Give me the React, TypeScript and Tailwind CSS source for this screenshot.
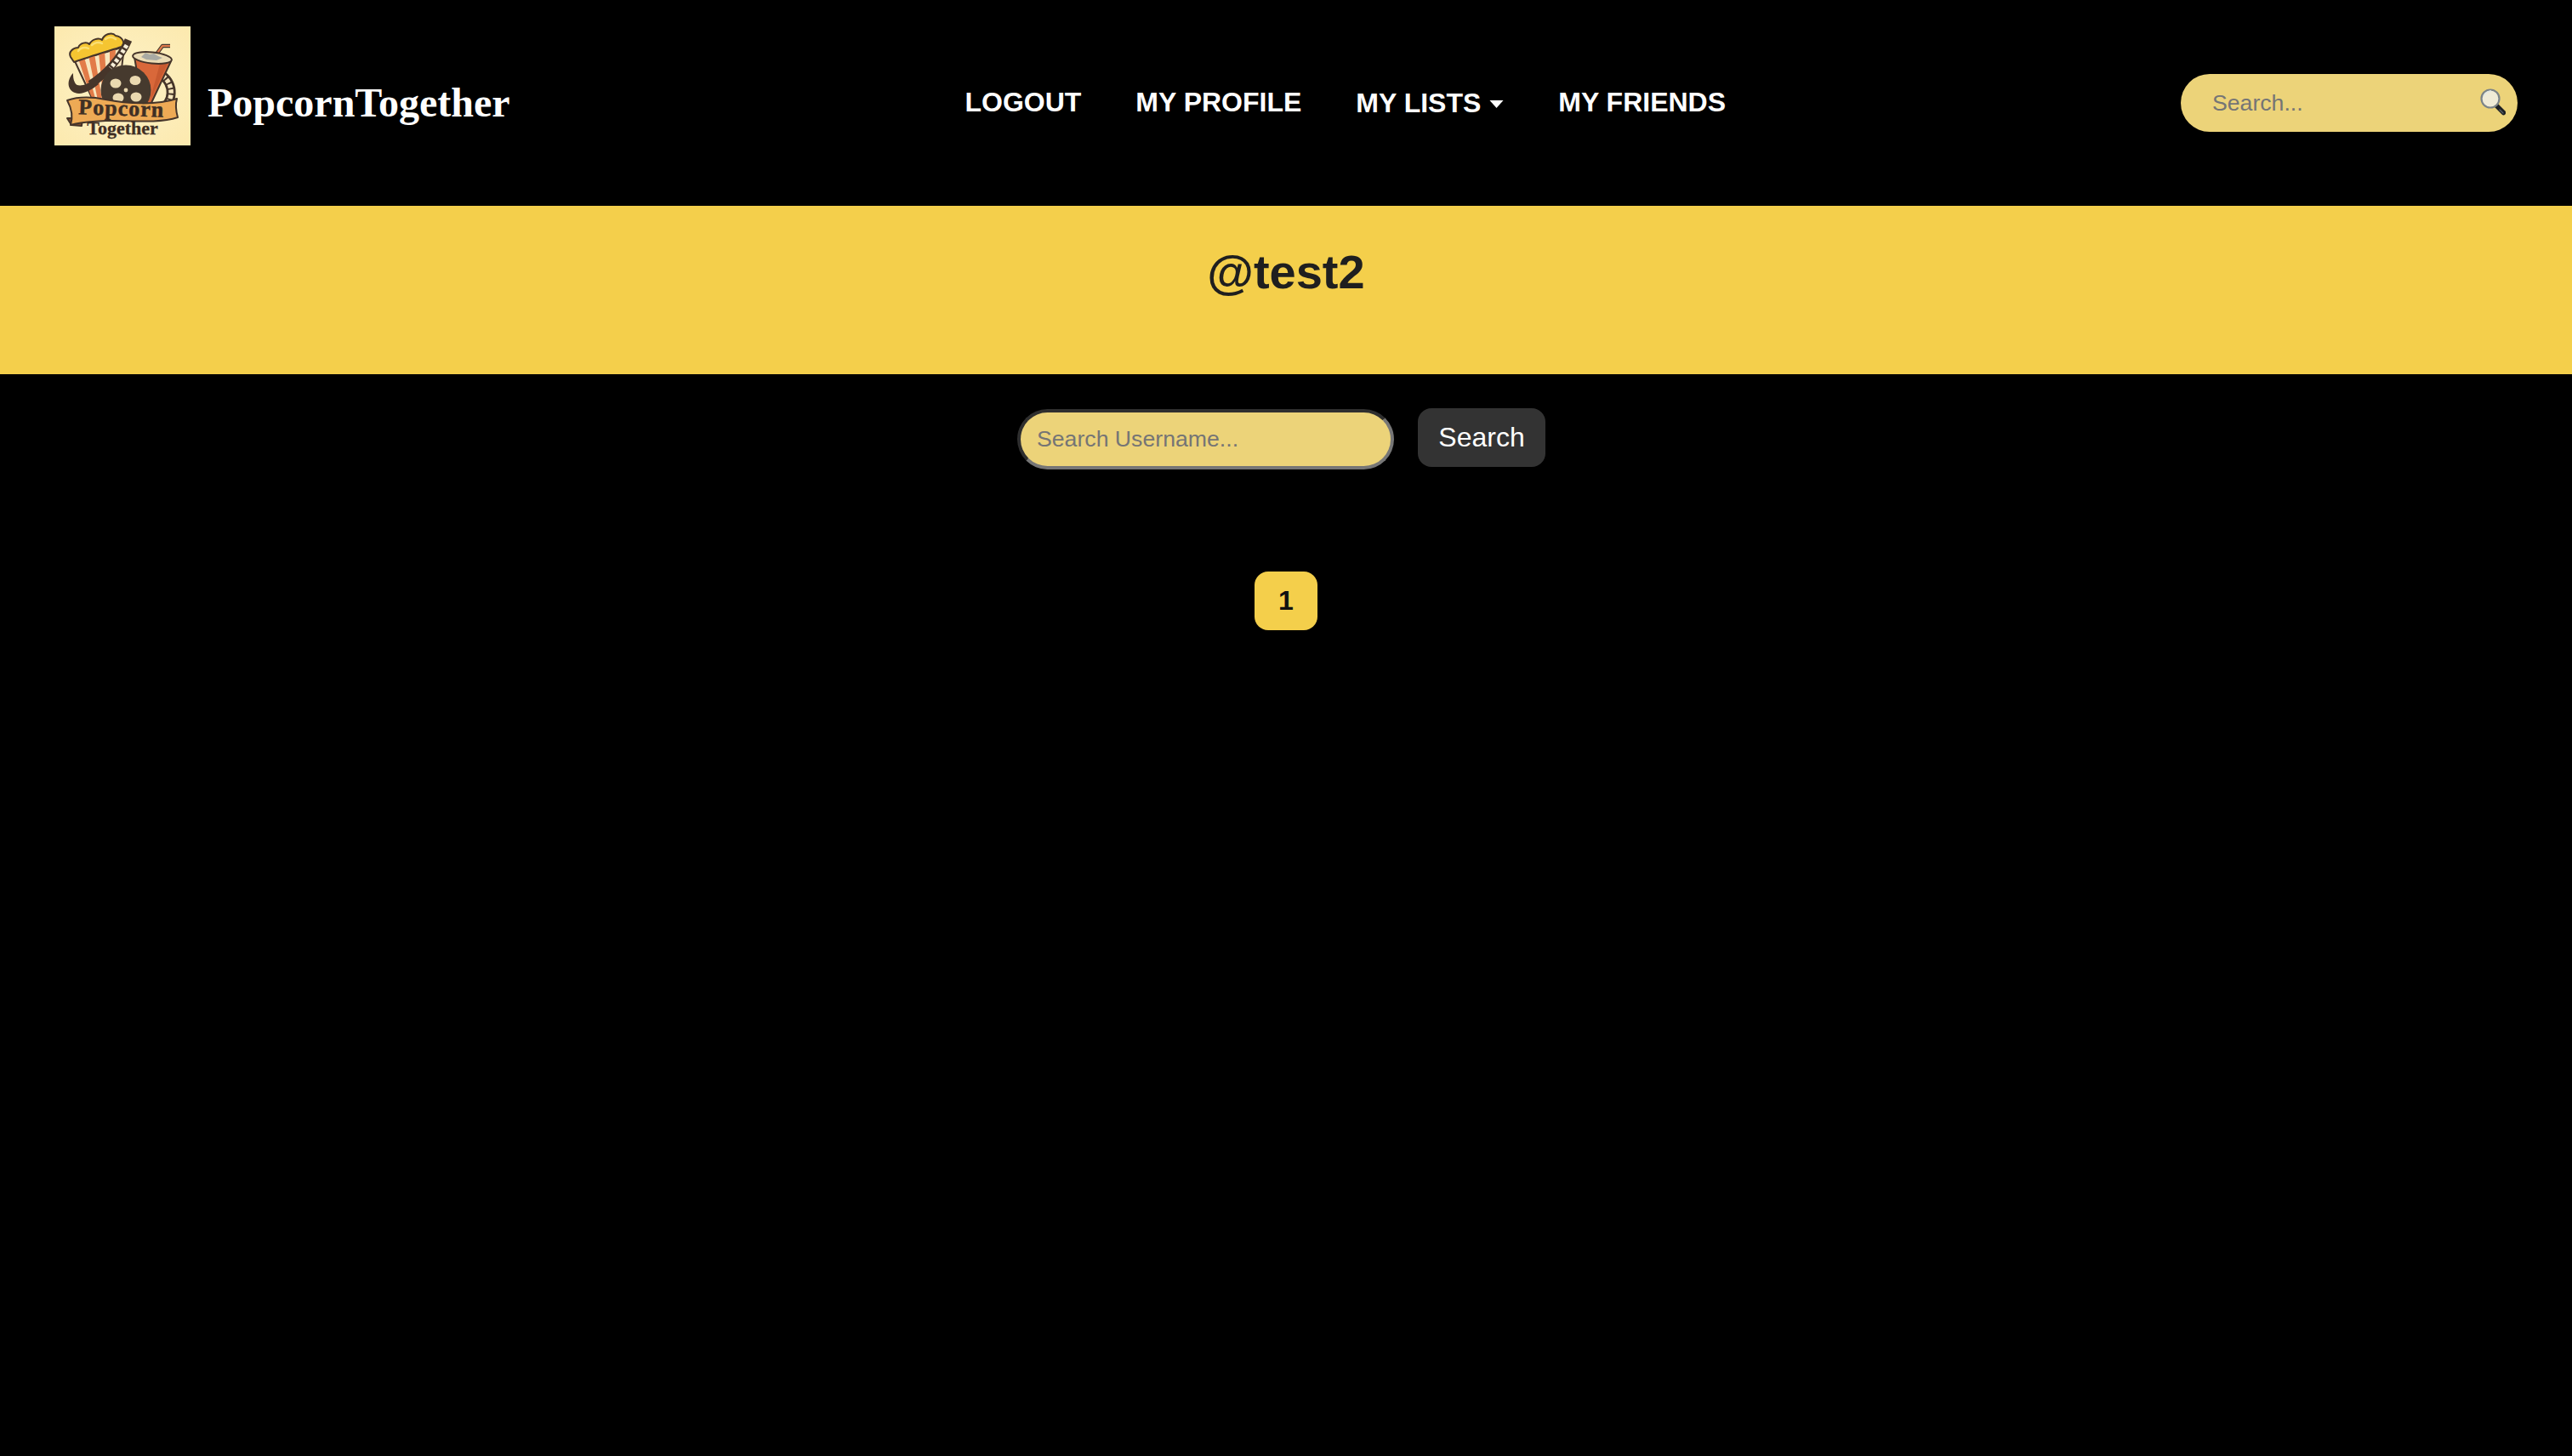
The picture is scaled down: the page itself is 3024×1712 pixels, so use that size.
import React from 'react';

const PopcornLogo: React.FC = () => {
  const outline = '#46352a';
  return (
    <svg viewBox="0 0 160 140" className="w-[160px] h-[140px] block">
      <defs>
        <radialGradient id="logoBg" cx="50%" cy="50%" r="70%">
          <stop offset="0%" stopColor="#fdf2c8" />
          <stop offset="100%" stopColor="#fce9ae" />
        </radialGradient>
        <clipPath id="bucketClip">
          <path d="M24 41 L82 24 L74 92 L45 86 Z" />
        </clipPath>
      </defs>
      <rect width="160" height="140" fill="url(#logoBg)" />

      {/* film ring behind the cup */}
      <path d="M127 58 C141 68 141 90 124 98" fill="none" stroke={outline} strokeWidth="11" />
      <path d="M127 58 C141 68 141 90 124 98" fill="none" stroke="#f6e6bd" strokeWidth="5.5" strokeDasharray="4.5 2" />

      {/* bucket */}
      <path d="M24 41 L82 24 L74 92 L45 86 Z" fill="#f8e6bd" stroke={outline} strokeWidth="2" strokeLinejoin="round" />
      <g clipPath="url(#bucketClip)">
        <path d="M28 38 L35 36 L50 92 L46 92 Z" fill="#e27b48" />
        <path d="M40 34 L47 32 L57 92 L52 92 Z" fill="#e27b48" />
        <path d="M52 31 L59 29 L63 92 L58 92 Z" fill="#e27b48" />
        <path d="M65 27 L72 25 L70 92 L65 92 Z" fill="#e27b48" />
      </g>

      {/* popcorn */}
      <path
        d="M19 36 C16 30 22 25 28 25 C30 19 38 18 41 21 C44 15 52 13 56 16 C58 9 68 6 72 11 C80 12 84 20 79 24 C60 30 40 36 23 42 Z"
        fill="#f5c531"
        stroke={outline}
        strokeWidth="2"
        strokeLinejoin="round"
      />
      <path d="M28 29 C30 25 36 24 40 26 M44 22 C47 19 52 18 56 20 M60 15 C64 12 68 12 72 15" fill="none" stroke="#fbdf72" strokeWidth="2.5" strokeLinecap="round" />

      {/* cup */}
      <path d="M94 36 L137 41 L113 92 L103 88 Z" fill="#d9683a" stroke={outline} strokeWidth="2" strokeLinejoin="round" />
      <path d="M124 44 L133 44 L112 88 Z" fill="#c85a30" />
      <path d="M119 34 L127 23 L136 23" fill="none" stroke={outline} strokeWidth="4.5" strokeLinejoin="round" />
      <path d="M119 34 L127 23 L136 23" fill="none" stroke="#e07c4c" strokeWidth="2.2" strokeLinejoin="round" />
      <ellipse cx="115" cy="37" rx="23" ry="6.5" fill="#ecdcb4" stroke={outline} strokeWidth="2" transform="rotate(6 115 37)" />
      <path d="M102 36 L107 31 L112 33 L117 32 L122 35 L127 37 L120 40 L108 39 Z" fill="#a9aaa3" />

      {/* film strip with its tail */}
      <path d="M22 55 C15 62 14 74 24 78 C32 81 42 76 52 68 L46 62 C38 70 26 72 24 66 C22 62 22 59 22 55 Z" fill={outline} />
      <path d="M87 16 C78 36 62 56 42 68" fill="none" stroke={outline} strokeWidth="9" />
      <path d="M85 22 C78 34 72 42 66 49" fill="none" stroke="#f6eed8" strokeWidth="5" strokeDasharray="4 2.5" />

      {/* reel */}
      <circle cx="84" cy="75" r="29.5" fill="#463a2e" />
      <ellipse cx="72" cy="67" rx="6.5" ry="5.5" fill="#ead9b0" />
      <ellipse cx="95" cy="63.5" rx="6.5" ry="5.5" fill="#ead9b0" />
      <ellipse cx="96" cy="83" rx="6.5" ry="5.5" fill="#ead9b0" />
      <ellipse cx="75" cy="84" rx="6.5" ry="5.5" fill="#ead9b0" />
      <circle cx="84" cy="75" r="2.4" fill="#ead9b0" />

      {/* ribbon */}
      <path d="M15 108 L20 116 L32 117 L33 108 Z" fill="#8b4d2c" stroke={outline} strokeWidth="2" strokeLinejoin="round" />
      <path
        d="M15 87 C30 82 45 83 60 86 C85 91 120 93 144 85 C142 92 143 100 145 107 C120 115 85 110 60 111 C45 112 32 112 19 116 C22 106 20 96 15 87 Z"
        fill="#eeaa55"
        stroke={outline}
        strokeWidth="2"
        strokeLinejoin="round"
      />
      <text
        x="78"
        y="105"
        textAnchor="middle"
        textLength="100"
        fontFamily="'Liberation Serif', serif"
        fontWeight="700"
        fontSize="26"
        fill="#3f2f24"
        stroke="#3f2f24"
        strokeWidth="0.5"
        transform="rotate(2 78 105)"
      >
        Popcorn
      </text>
      <text
        x="80"
        y="127"
        textAnchor="middle"
        fontFamily="'Liberation Serif', serif"
        fontWeight="700"
        fontSize="22"
        fill="#3f2f24"
        stroke="#3f2f24"
        strokeWidth="0.3"
      >
        Together
      </text>
    </svg>
  );
};

const MagnifierIcon: React.FC = () => (
  <svg viewBox="0 0 30 32" className="w-[30px] h-[32px] block">
    <path d="M19 20 L27.5 28.5" stroke="#1d2024" strokeWidth="5.5" strokeLinecap="round" />
    <path d="M23 25 L27 29" stroke="#59606a" strokeWidth="1.2" strokeLinecap="round" />
    <circle cx="12" cy="12" r="10.5" fill="#f0ebd7" stroke="#7c8488" strokeWidth="2.2" />
    <path d="M4.5 9 A8.5 8.5 0 0 1 13 3" fill="none" stroke="#dfe6e6" strokeWidth="1.4" />
  </svg>
);

const App: React.FC = () => {
  const links = ['LOGOUT', 'MY PROFILE'];

  return (
    <div className="min-h-screen bg-black font-['Liberation_Sans',Arial,sans-serif]">
      <header className="h-[242px] flex items-center justify-between px-16">
        <div className="flex items-center gap-[20px]">
          <div className="mb-10">
            <PopcornLogo />
          </div>
          <span className="font-['Liberation_Serif',serif] font-bold text-[48px] leading-none text-white">
            PopcornTogether
          </span>
        </div>

        <nav className="flex items-center gap-[64px] mb-[3px] text-[32px] font-bold text-white leading-none">
          {links.map((link) => (
            <a key={link}>{link}</a>
          ))}
          <a className="flex items-center gap-[10px] pt-[2px]">
            MY LISTS
            <svg viewBox="0 0 16 9" className="w-[17px] h-[9px] mt-[4px]">
              <polygon points="0,0 16,0 8,9" fill="#fff" />
            </svg>
          </a>
          <a>MY FRIENDS</a>
        </nav>

        <div className="relative">
          <input
            placeholder="Search..."
            className="w-[396px] h-[68px] rounded-[34px] bg-[#ecd379] pl-[37px] pr-[60px] text-[26.67px] outline-none placeholder:text-[#757575]"
          />
          <span className="absolute right-[14px] top-[17px]">
            <MagnifierIcon />
          </span>
        </div>
      </header>

      <div className="h-[198px] bg-[#f4cf4b] pt-[46px] text-center">
        <h1 className="text-[56px] leading-[64px] font-bold text-[#1f1f1f]">@test2</h1>
      </div>

      <form className="flex justify-center items-start gap-[28px] pt-[40px] pr-[11px]">
        <input
          placeholder="Search Username..."
          className="w-[443px] h-[71px] mt-[1px] rounded-[36px] bg-[#ecd379] border-[4px] border-t-[#2f2f2f] border-l-[#2f2f2f] border-b-[#767676] border-r-[#767676] pl-[19px] pr-[19px] text-[26.67px] outline-none placeholder:text-[#757575]"
        />
        <button type="button" className="w-[150px] h-[69px] pb-[2px] rounded-[16px] bg-[#333333] text-white text-[32px]">
          Search
        </button>
      </form>

      <div className="flex justify-center pt-[120px]">
        <span className="w-[74px] h-[69px] pb-[2px] rounded-[16px] bg-[#f4cf4b] flex items-center justify-center text-[32px] font-bold text-[#111111]">
          1
        </span>
      </div>
    </div>
  );
};

export default App;
